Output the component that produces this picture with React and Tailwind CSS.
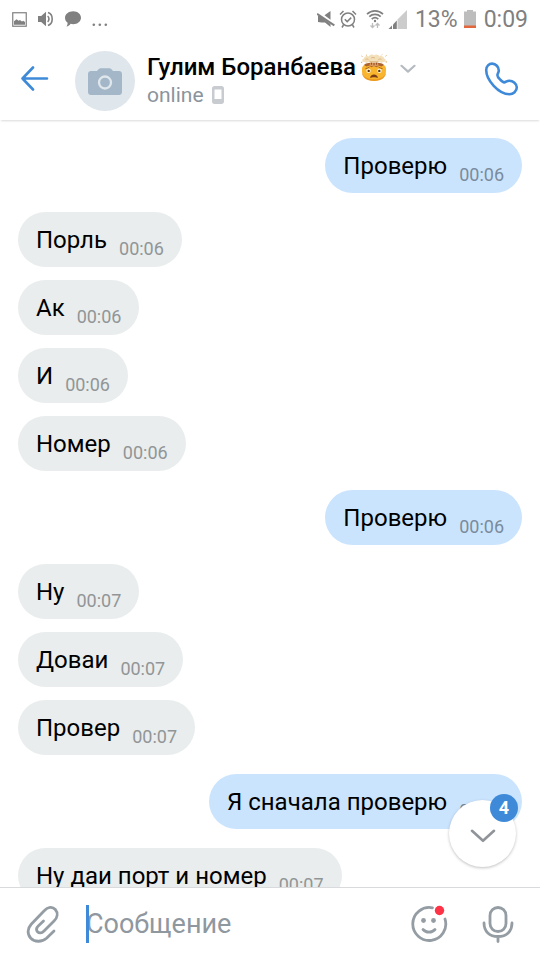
import React from "react";

const messages = [
  { text: "Проверю", time: "00:06", mine: true },
  { text: "Порль", time: "00:06" },
  { text: "Ак", time: "00:06" },
  { text: "И", time: "00:06" },
  { text: "Номер", time: "00:06" },
  { text: "Проверю", time: "00:06", mine: true },
  { text: "Ну", time: "00:07" },
  { text: "Доваи", time: "00:07" },
  { text: "Провер", time: "00:07" },
  { text: "Я сначала проверю", time: "00:07", mine: true },
  { text: "Ну даи порт и номер", time: "00:07" },
];

const StatusBar = () => (
  <div className="flex h-[38px] shrink-0 items-center justify-between px-3 text-[#808080]">
    <div className="flex items-center gap-[11px]">
      {/* Picture */}
      <svg className="h-[15px] w-[15px]" viewBox="0 0 15 15" fill="none">
        <rect x="0.75" y="0.75" width="13.5" height="13.5" stroke="currentColor" strokeWidth="1.2" />
        <path d="M2 12.8V9.2l2.6-2 2 1.6 1.4-.8 2 1.6 1.2-.8L13 10v2.8z" fill="currentColor" />
      </svg>
      {/* Speaker */}
      <svg className="h-4 w-4" viewBox="0 0 16 16" fill="none">
        <path d="M0 5h3.2L8 .8v14.4L3.2 11H0z" fill="currentColor" />
        <path d="M9.6 5.2c1.8 1.2 1.8 4.4 0 5.6M10 1.6c5.6 1.8 5.6 11 0 12.8" stroke="currentColor" strokeWidth="1.6" />
      </svg>
      {/* Chat bubble */}
      <svg className="h-4 w-4" viewBox="0 0 16 16" fill="currentColor">
        <path d="M8.2.2C12.600.2 16 3.100 16 6.700s-3.500 6.500-7.800 6.500c-1 0-1.800-.1-2.600-.4-.8 1.300-2.300 2.500-4.200 2.700.9-1 1.300-2.300 1.200-3.700C1 10.600 0 8.800 0 6.700 0 3.100 3.700.2 8.200.2z" />
      </svg>
      <svg className="h-4 w-4" viewBox="0 0 16 16" fill="currentColor">
        <circle cx="1.800" cy="13.800" r="1.300" />
        <circle cx="7.800" cy="13.800" r="1.300" />
        <circle cx="13.800" cy="13.800" r="1.300" />
      </svg>
    </div>
    <div className="flex items-center">
      {/* Muted */}
      <svg className="h-[18px] w-[18px]" viewBox="0 0 18 18" fill="currentColor">
        <path d="M1 6h2l10.500 8v3L8 12.500H4.500L1 12z" />
        <path d="M7.500 5.200L13.500 1v8.800z" />
        <path d="M0 3.800l17.300 11.600" stroke="currentColor" strokeWidth="2" />
      </svg>
      {/* Alarm */}
      <svg className="ml-1 h-[18px] w-[18px]" viewBox="0 0 18 18" fill="none" stroke="currentColor" strokeWidth="1.500">
        <circle cx="9" cy="9.500" r="6.500" />
        <path d="M5.800 9.200l2.400 2.400 4-4M1 4.500L4.500 1M17 4.500L13.500 1M4.500 15L3 17.500M13.500 15l1.500 2.500" />
      </svg>
      {/* Wi-Fi */}
      <svg className="ml-[9px] h-[19px] w-[18px]" viewBox="0 0 18 19" fill="none" stroke="currentColor" strokeWidth="1.700">
        <path d="M1 4.200C5.500-.2 12.500-.2 17 4.200M3.300 6.700c3.200-3 8.200-3 11.400 0M5.700 9.200c1.900-1.700 4.700-1.700 6.600 0" />
        <circle cx="9" cy="11" r="1.200" fill="currentColor" stroke="none" />
        <path d="M6.500 13v4.500M4.500 15.500l2 2 2-2M11.500 18v-4.500M9.500 15.500l2-2 2 2" stroke="#bdbdbd" strokeWidth="1.300" />
      </svg>
      {/* Signal */}
      <svg className="ml-1 h-[19px] w-[19px]" viewBox="0 0 19 19">
        <path d="M19 0v19H9.500V9.500z" fill="#cccccc" />
        <path d="M8.800 10.500V19H5v-4.500z" fill="currentColor" />
        <path d="M4 15.500V19H.5z" fill="currentColor" />
      </svg>
      <span className="ml-2 text-[23px] leading-none">13%</span>
      {/* Battery */}
      <svg className="ml-1.5 h-[18px] w-3" viewBox="0 0 12 18">
        <path d="M0 1.500h3V0h6v1.500h3V18H0z" fill="#bdbdbd" />
        <rect y="15.500" width="12" height="2.500" fill="#e2673c" />
      </svg>
      <span className="ml-2 text-[23px] leading-none">0:09</span>
    </div>
  </div>
);

const ExplodingHead = () => (
  <svg className="ml-1 h-[27px] w-7 shrink-0" viewBox="0 0 28 27" role="img" aria-label="Взрыв мозга">
    <path d="M2 15c0-2 1-3.500 2.500-4h19c1.500.5 2.500 2 2.500 4 .6 7-4 11.800-12 11.800S1.400 22 2 15z" fill="#f9b52e" />
    <path d="M2 18c1.200 5 5.500 7.300 12 7.300S24.800 23 26 18c.2 5.200-4.300 8.900-12 8.900S1.800 23.200 2 18z" fill="#ea9720" />
    {/* Crater and blast */}
    <path d="M4 11c1-1.700 4-2.300 10-2.300s9 .6 10 2.300l-2.500 1.600-2.600-.8-2.400 1.500-2.500-1.300-2.500 1.300-2.400-1.500-2.600.8z" fill="#ad6530" />
    <path d="M10 6.500h8c-.8 2-.3 3.500 1 5-3 1-7 1-10 0 1.300-1.500 1.800-3 1-5z" fill="#dc9b60" />
    <path d="M11.800 7.500l-.4 3.200M14 7.500v3.800M16.200 7.500l.4 3.200" stroke="#8f4c26" />
    <path d="M4.500 8C1.800 8 1.700 4.800 4 4.600 4 2.300 7 1.200 8.700 2.400 10.300.2 13 .2 14.200 1.500 16-.2 18.600.5 19.300 2.400c2.200-.9 4.700.2 4.700 2.200 2.300.2 2.200 3.400-.5 3.400-1.400 1-3.200.8-4.400 0-2.500 1-7.700 1-10.200 0-1.200.8-3 1-4.400 0z" fill="#f3dfb9" />
    <path d="M5.500 5.500c1-.9 2.400-.7 3 .3M11 4.200c1-1 3-1 4 0M18.300 5.700c1-1 2.400-.9 3.200-.2M9.500 7.200c2 .7 7 .7 9 0" stroke="#d6b078" strokeWidth=".8" fill="none" />
    <path d="M1.500 2l1 .6M26.500 1.500l-1 .7M1 8.500l1.300-.4M27 8l-1.400-.2M6 .8l.8.6M22 .6l-.7.7" stroke="#e0a35b" />
    {/* Face */}
    <circle cx="8.500" cy="16.800" r="2.200" fill="#fff3d6" />
    <circle cx="19.500" cy="16.800" r="2.200" fill="#fff3d6" />
    <circle cx="8.700" cy="16.900" r="1.200" fill="#5a3218" />
    <circle cx="19.300" cy="16.900" r="1.200" fill="#5a3218" />
    <path d="M5.500 14.600c1.600-.2 2.800-.7 4-1.500M22.500 14.600c-1.600-.2-2.800-.7-4-1.500" stroke="#a4611c" fill="none" />
    <path d="M10.200 24c-.3-4.800 7.900-4.800 7.600 0-1.600-.9-6-.9-7.600 0z" fill="#7a3d17" />
  </svg>
);

const Header = () => (
  <header className="z-10 flex h-[82px] shrink-0 items-center bg-white px-5 shadow-[0_2px_2px_-1px_rgba(0,0,0,0.15)]">
    <button type="button" aria-label="Назад" className="shrink-0 text-[#3f8ad8]">
      <svg className="h-[26px] w-[30px]" viewBox="0 0 30 26" fill="none" stroke="currentColor" strokeWidth="2.600" strokeLinecap="round" strokeLinejoin="round">
        <path d="M27 12.500H2.500M13 1.500l-10.500 11 10.500 11" />
      </svg>
    </button>
    <div className="ml-[25px] mt-1 flex h-[60px] w-[60px] shrink-0 items-center justify-center rounded-full bg-[#dfe6ec]">
      <svg className="h-[27px] w-[34px]" viewBox="0 0 34 27">
        <path d="M3 3h6l1.800-2c.5-.6 1-.8 1.700-.8h9c.7 0 1.200.2 1.700.8L25 3h6c1.700 0 3 1.300 3 3v18c0 1.700-1.300 3-3 3H3c-1.700 0-3-1.300-3-3V6c0-1.700 1.300-3 3-3z" fill="#a3b7c8" />
        <circle cx="17" cy="14.500" r="6" fill="#a3b7c8" stroke="#dfe6ec" strokeWidth="2.300" />
      </svg>
    </div>
    <div className="ml-3 mt-1 min-w-0 flex-1">
      <div className="flex items-center">
        <h1 className="whitespace-nowrap text-2xl leading-7 font-medium text-black">Гулим Боранбаева</h1>
        <ExplodingHead />
        <svg className="ml-3 mt-1 h-[10px] w-4 shrink-0" viewBox="0 0 16 10" fill="none" stroke="#b5bbc1" strokeWidth="2.200" strokeLinecap="round" strokeLinejoin="round">
          <path d="M1.500 1.800L8 7.600l6.500-5.800" />
        </svg>
      </div>
      <div className="flex items-center text-[21px] leading-7 text-[#8b949c]">
        online
        <svg className="ml-2 h-[18px] w-3" viewBox="0 0 12 18">
          <path d="M2.500 0h7C11 0 12 1 12 2.500v13c0 1.500-1 2.500-2.500 2.500h-7C1 18 0 17 0 15.500v-13C0 1 1 0 2.500 0zM2.500 3.500v9.500h7V3.500z" fill="#c8cbcf" fillRule="evenodd" />
        </svg>
      </div>
    </div>
    <button type="button" aria-label="Позвонить" className="shrink-0 text-[#3f8ad8]">
      <svg className="h-[36px] w-[36px]" viewBox="0 0 36 36" fill="none" stroke="currentColor" strokeWidth="2.600" strokeLinejoin="round">
        <path d="M2.200 9C2.200 5 5 2.600 8.200 2.600c3.600 0 6.600 3.400 6.600 7 0 2-1.400 3-1.400 4.600 0 1.800 4.600 7.200 6.800 7.200 1.600 0 2.400-1.700 5.200-1.700 3.600 0 7.400 3 7.400 6.600 0 4-3.400 6.900-7.400 6.900C14.500 33.200 2.200 19 2.200 9z" />
      </svg>
    </button>
  </header>
);

const Message = ({ text, time, mine, gap }) => (
  <li
    className={`flex h-[55px] shrink-0 items-center gap-3 whitespace-nowrap rounded-full px-[18px] ${
      mine ? "self-end bg-[#cbe4fe]" : "self-start bg-[#e9eded]"
    } ${gap}`}
  >
    <span className="text-2xl leading-7 text-black">{text}</span>
    <time className={`mt-[18px] text-lg leading-5 ${mine ? "text-[#7a8b9c]" : "text-[#919597]"}`}>{time}</time>
  </li>
);

const Composer = () => (
  <footer className="flex h-[73px] shrink-0 items-center border-t border-[#d9dadc] bg-white px-[26px] text-[#959da4]">
    <button type="button" aria-label="Прикрепить" className="shrink-0">
      <svg className="h-[38px] w-[34px]" viewBox="0 0 34 38" fill="none" stroke="currentColor" strokeWidth="2.800" strokeLinecap="round" strokeLinejoin="round">
        <path d="M28 26l-7.500 7.200C15.500 37.500 8.500 37 4.800 33.200 1 29.200 1.300 23.500 5.200 19.200L18.200 5.800C21.800 1.800 26.500 1.300 29.300 4.500c3 3.400 2.200 8-1.300 11.500L18 26c-2.500 2.500-5 2.300-6.500.8-1.500-1.800-1.300-3.800 1-6l5-4.800" />
      </svg>
    </button>
    <div className="relative ml-[26px] flex min-w-0 flex-1 items-center">
      <input
        type="text"
        aria-label="Сообщение"
        placeholder="Сообщение"
        className="h-[38px] w-full min-w-0 bg-transparent text-[27px] text-black outline-none placeholder:text-[#8f979f]"
      />
      <span className="absolute left-0 top-0 h-[38px] w-[3px] bg-[#3f8ad8]" />
    </div>
    <button type="button" aria-label="Стикеры" className="shrink-0">
      <svg className="h-[38px] w-[38px]" viewBox="0 0 38 38" fill="none" stroke="currentColor" strokeWidth="2.800" strokeLinecap="round">
        <path d="M22.500 2.800A16.500 16.500 0 1 0 35 14" />
        <path d="M13 24.500c3 3.500 9 3.500 12 0" />
        <circle cx="13.500" cy="15.500" r="2.400" fill="currentColor" stroke="none" />
        <circle cx="23.500" cy="15.500" r="2.400" fill="currentColor" stroke="none" />
        <circle cx="29.500" cy="5.500" r="4.700" fill="#ff3347" stroke="none" />
      </svg>
    </button>
    <button type="button" aria-label="Голосовое сообщение" className="ml-[34px] shrink-0">
      <svg className="h-[38px] w-[32px]" viewBox="0 0 32 38" fill="none" stroke="currentColor" strokeWidth="2.800" strokeLinecap="round">
        <rect x="8" y="2.500" width="16" height="24" rx="8" />
        <path d="M2 18c0 8.500 5.500 13.500 14 13.500S30 26.500 30 18M16 31.500v5" />
      </svg>
    </button>
  </footer>
);

export default function App() {
  return (
    <div className="flex h-screen flex-col overflow-hidden bg-white font-['Roboto','Noto_Sans',sans-serif]">
      <StatusBar />
      <Header />
      <main className="relative min-h-0 flex-1 overflow-hidden">
        <ul className="flex flex-col px-[18px] pt-[18px]">
          {messages.map((message, index) => {
            const previous = messages[index - 1];
            let gap = "mt-[13px]";
            if (!previous) gap = "";
            else if (!!previous.mine !== !!message.mine) gap = "mt-[19px]";
            return <Message key={index} {...message} gap={gap} />;
          })}
        </ul>
        {/* Scroll to the newest message */}
        <button
          type="button"
          aria-label="Вниз, новых сообщений: 4"
          className="absolute bottom-5 right-6 flex h-[67px] w-[67px] items-center justify-center rounded-full bg-white text-[#909499] shadow-[0_1px_3px_rgba(0,0,0,0.25)]"
        >
          <svg className="mt-1 h-[14px] w-[26px]" viewBox="0 0 26 14" fill="none" stroke="currentColor" strokeWidth="2.600" strokeLinecap="round" strokeLinejoin="round">
            <path d="M2 1.800l11 10 11-10" />
          </svg>
          <span className="absolute -right-0.5 -top-1.5 flex h-7 w-7 items-center justify-center rounded-full bg-[#3f8ad8] text-lg font-bold text-white">
            4
          </span>
        </button>
      </main>
      <Composer />
    </div>
  );
}
